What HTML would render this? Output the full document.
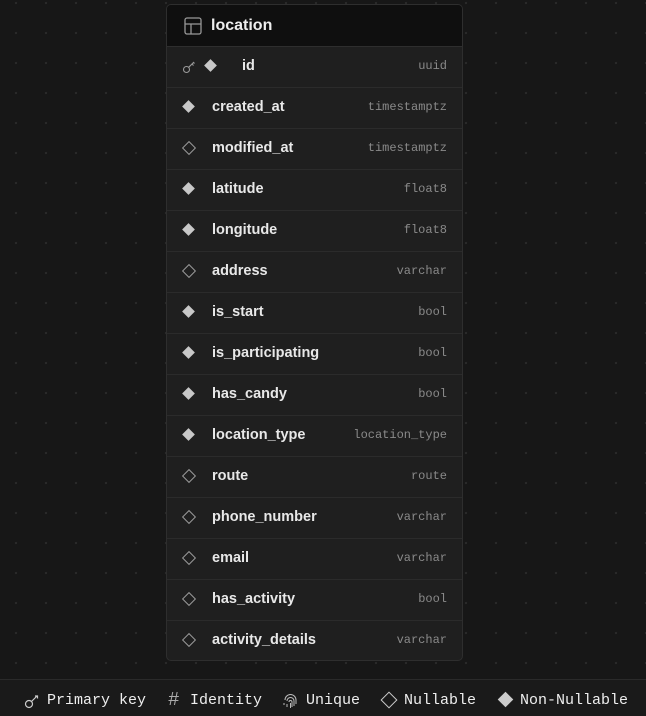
<!DOCTYPE html>
<html><head><style>
body{margin:0;width:646px;height:715px;overflow:hidden;background:#171717;
background-image:radial-gradient(circle,#2a2a2a 1px,transparent 1.3px);background-size:30px 30px;background-position:1px -12px;
font-family:"Liberation Sans",sans-serif;position:relative}
.card{position:absolute;left:166px;top:4px;width:295px;height:655px;border:1px solid #2e2e2e;border-radius:5px;background:#1f1f1f;overflow:hidden}
.hd{height:41px;background:#0f0f0f;border-bottom:1px solid #2e2e2e;display:flex;align-items:center;color:#eee;font-size:16px;font-weight:bold}
.hd svg{margin:0 9px 0 17px}
.row{height:40px;border-bottom:1px solid #2b2b2b;position:relative;color:#e8e8e8;font-size:14.5px;font-weight:bold}
.row:last-child{border-bottom:none}
.row .n{position:absolute;left:45px;top:11px}
.row .t{position:absolute;right:15px;top:12px;font-family:"Liberation Mono",monospace;font-weight:normal;font-size:12px;color:#8a8a8a}
.d{position:absolute;left:17px;top:14px;width:9px;height:9px;transform:rotate(45deg);background:#c8c8c8}
.d.o{background:none;border:1px solid #9a9a9a;width:8px;height:8px}
.foot{position:absolute;left:0;top:679px;width:646px;height:36px;background:#1a1a1a;border-top:1px solid #2a2a2a;font-family:"Liberation Mono",monospace;font-size:15px;color:#eee}
.foot span{position:absolute;top:12px}
</style></head><body>
<div class="card">
<div class="hd"><svg width="18" height="18" viewBox="0 0 18 18" fill="none" stroke="#999" stroke-width="1.3"><rect x="1" y="1" width="16" height="16" rx="2"/><path d="M1 7H17M7 7V17"/></svg>location</div>
<div class="row"><svg style="position:absolute;left:15px;top:13px" width="14" height="14" viewBox="0 0 14 14" fill="none" stroke="#999" stroke-width="1.1"><circle cx="4.5" cy="9.5" r="3"/><path d="M6.7 7.3L12 2M10 4l1.5 1.5M11.5 2.5l1 1"/></svg><div class="d" style="left:39px"></div><span class="n" style="left:75px">id</span><span class="t">uuid</span></div>
<div class="row"><div class="d"></div><span class="n">created_at</span><span class="t">timestamptz</span></div>
<div class="row"><div class="d o"></div><span class="n">modified_at</span><span class="t">timestamptz</span></div>
<div class="row"><div class="d"></div><span class="n">latitude</span><span class="t">float8</span></div>
<div class="row"><div class="d"></div><span class="n">longitude</span><span class="t">float8</span></div>
<div class="row"><div class="d o"></div><span class="n">address</span><span class="t">varchar</span></div>
<div class="row"><div class="d"></div><span class="n">is_start</span><span class="t">bool</span></div>
<div class="row"><div class="d"></div><span class="n">is_participating</span><span class="t">bool</span></div>
<div class="row"><div class="d"></div><span class="n">has_candy</span><span class="t">bool</span></div>
<div class="row"><div class="d"></div><span class="n">location_type</span><span class="t">location_type</span></div>
<div class="row"><div class="d o"></div><span class="n">route</span><span class="t">route</span></div>
<div class="row"><div class="d o"></div><span class="n">phone_number</span><span class="t">varchar</span></div>
<div class="row"><div class="d o"></div><span class="n">email</span><span class="t">varchar</span></div>
<div class="row"><div class="d o"></div><span class="n">has_activity</span><span class="t">bool</span></div>
<div class="row"><div class="d o"></div><span class="n">activity_details</span><span class="t">varchar</span></div>
</div>
<div class="foot">
<svg style="position:absolute;left:24px;top:13px" width="16" height="16" viewBox="0 0 16 16" fill="none" stroke="#ccc" stroke-width="1.2"><circle cx="5" cy="11" r="3.5"/><path d="M7.5 8.5L13 3M11 3h2.5v2.5"/></svg>
<span style="left:47px">Primary key</span>
<span style="left:168px;top:9px;color:#aaa;font-size:19px">#</span><span style="left:190px">Identity</span>
<svg style="position:absolute;left:282px;top:12px" width="17" height="17" viewBox="0 0 17 17" fill="none" stroke="#bbb" stroke-width="1"><path d="M3 8a5.5 5.5 0 0 1 11 0v4M5 9a3.5 3.5 0 0 1 7 0v5M7 10a1.5 1.5 0 0 1 3 0v5M8.5 11v5M2 11v2M5 12v3"/></svg>
<span style="left:306px">Unique</span>
<div style="position:absolute;left:383px;top:14px;width:10px;height:10px;border:1.3px solid #ccc;transform:rotate(45deg)"></div>
<span style="left:404px">Nullable</span>
<div style="position:absolute;left:500px;top:14px;width:11px;height:11px;background:#ccc;transform:rotate(45deg)"></div>
<span style="left:520px">Non-Nullable</span>
</div>
</body></html>
